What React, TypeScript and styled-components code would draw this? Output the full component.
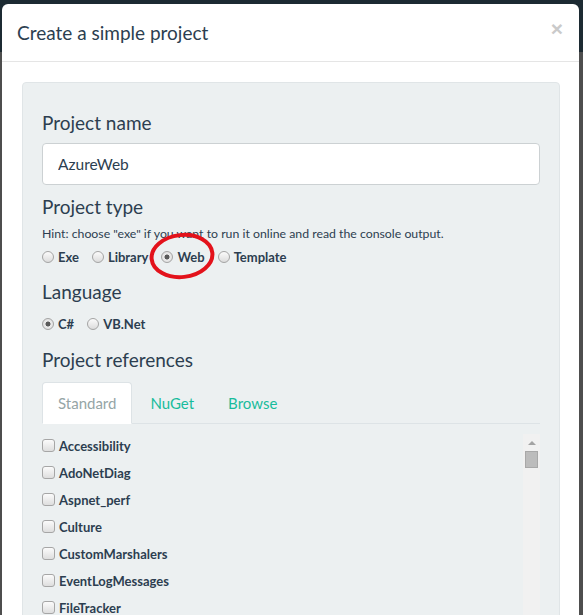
import React from 'react';
import styled, { createGlobalStyle } from 'styled-components';

const GlobalStyle = createGlobalStyle`
  html, body { margin: 0; padding: 0; }
  body {
    width: 583px;
    height: 615px;
    overflow: hidden;
    background: linear-gradient(to bottom, #1c2a32 0, #1c2a32 52px, #4e4e4e 52px);
    font-family: Lato, "Open Sans", sans-serif;
    color: #2c3e50;
  }
  * { box-sizing: border-box; }
`;

const Modal = styled.div`
  margin: 4px 4px 0 2px;
  width: 577px;
  height: 611px;
  background: #fff;
  border-radius: 6px 6px 0 0;
  overflow: hidden;
`;

const Header = styled.div`
  display: flex;
  justify-content: space-between;
  align-items: flex-start;
  height: 58px;
  padding: 17px 16px 0 15px;
  border-bottom: 1px solid #e5e5e5;
`;

const Title = styled.h4`
  margin: 0;
  font-size: 19px;
  line-height: 23px;
  font-weight: 400;
  color: #2c3e50;
`;

const Close = styled.button`
  border: 0;
  background: none;
  padding: 0;
  margin-top: -3px;
  font-family: "Liberation Sans", Arial, sans-serif;
  font-size: 21px;
  font-weight: 700;
  line-height: 21px;
  color: #cacaca;
  cursor: pointer;
`;

const Body = styled.div`
  padding: 20px 19px 0 20px;
`;

const Panel = styled.div`
  background: #ecf0f1;
  border: 1px solid #e0e5e7;
  border-radius: 4px;
  padding: 29px 19px 0 19px;
  height: 700px;
`;

const Field = styled.div<{ $top?: number }>`
  margin-top: ${(p) => p.$top ?? 0}px;
`;

const Heading = styled.div<{ $gap?: number }>`
  font-size: 19px;
  line-height: 22px;
  color: #2c3e50;
  margin-bottom: ${(p) => p.$gap ?? 0}px;
`;

const TextInput = styled.input`
  display: block;
  width: 100%;
  height: 42px;
  border: 1px solid #ccd1d3;
  border-radius: 4px;
  background: #fff;
  padding: 0 15px;
  font-family: Lato, sans-serif;
  font-size: 15.5px;
  color: #2c3e50;
  outline: none;
`;

const Hint = styled.div`
  margin-top: 7px;
  font-size: 12.3px;
  line-height: 18px;
  color: #2c3e50;
`;

const OptionRow = styled.div<{ $top: number }>`
  display: flex;
  align-items: baseline;
  gap: 13px;
  margin-top: ${(p) => p.$top}px;
  height: 18px;
`;

const Option = styled.label`
  position: relative;
  display: inline-flex;
  align-items: baseline;
  gap: 4px;
  font-size: 13px;
  line-height: 18px;
  font-weight: 700;
  color: #2c3e50;
`;

const RadioDot = styled.span<{ $checked?: boolean }>`
  display: inline-block;
  width: 12px;
  height: 12px;
  border-radius: 50%;
  border: 1px solid #a4a4a4;
  background: ${(p) =>
    p.$checked
      ? 'radial-gradient(circle, #5a5a5a 0, #5a5a5a 2.2px, #ececec 2.8px, #d8d8d8 100%)'
      : 'linear-gradient(#fbfbfb, #dcdcdc)'};
  position: relative;
  top: 1px;
`;

const Annotation = styled.svg`
  position: absolute;
  left: -14px;
  top: -17px;
  width: 70px;
  height: 50px;
  overflow: visible;
  pointer-events: none;
`;

const Tabs = styled.div`
  display: flex;
  margin-top: 11px;
  border-bottom: 1px solid #dde3e6;
`;

const Tab = styled.div<{ $active?: boolean }>`
  padding: 10px 15px;
  margin-right: 2px;
  margin-bottom: -1px;
  font-size: 15px;
  line-height: 20px;
  border: 1px solid ${(p) => (p.$active ? '#dde3e6' : 'transparent')};
  border-bottom-color: transparent;
  border-radius: 4px 4px 0 0;
  background: ${(p) => (p.$active ? '#fff' : 'transparent')};
  color: ${(p) => (p.$active ? '#95a5a6' : '#18bc9c')};
`;

const ListArea = styled.div`
  display: flex;
  margin-top: 10px;
  height: 260px;
`;

const Items = styled.div`
  flex: 1;
  padding-top: 2px;
`;

const Item = styled.label`
  display: flex;
  align-items: baseline;
  gap: 4px;
  height: 20px;
  margin-bottom: 7px;
  font-size: 13px;
  line-height: 20px;
  font-weight: 700;
  color: #2c3e50;
`;

const CheckBox = styled.span`
  display: inline-block;
  width: 13px;
  height: 13px;
  border: 1px solid #a6a6a6;
  border-radius: 3px;
  background: linear-gradient(#fbfbfb, #dedede);
  position: relative;
  top: 1px;
`;

const ScrollTrack = styled.div`
  width: 17px;
  background: #f1f1f1;
  display: flex;
  flex-direction: column;
  align-items: center;
  padding-top: 7px;
`;

const ScrollArrow = styled.div`
  width: 0;
  height: 0;
  border-left: 4px solid transparent;
  border-right: 4px solid transparent;
  border-bottom: 4px solid #a3a3a3;
`;

const ScrollThumb = styled.div`
  width: 13px;
  height: 17px;
  margin-top: 6px;
  background: #bcbcbc;
  border: 1px solid #a8a8a8;
`;

const refs = [
  'Accessibility',
  'AdoNetDiag',
  'Aspnet_perf',
  'Culture',
  'CustomMarshalers',
  'EventLogMessages',
  'FileTracker',
  'ISymWrapper',
  'Microsoft.Build',
];

const types = ['Exe', 'Library', 'Web', 'Template'];

export default function App() {
  return (
    <>
      <GlobalStyle />
      <Modal>
        <Header>
          <Title>Create a simple project</Title>
          <Close aria-label="Close">×</Close>
        </Header>
        <Body>
          <Panel>
            <Field>
              <Heading $gap={9}>Project name</Heading>
              <TextInput defaultValue="AzureWeb" />
            </Field>
            <Field $top={11}>
              <Heading>Project type</Heading>
              <Hint>Hint: choose "exe" if you want to run it online and read the console output.</Hint>
              <OptionRow $top={5}>
                {types.map((t) => (
                  <Option key={t}>
                    <RadioDot $checked={t === 'Web'} />
                    {t}
                    {t === 'Web' && (
                      <Annotation viewBox="0 0 70 50">
                        <ellipse
                          cx="35"
                          cy="25"
                          rx="30.5"
                          ry="21"
                          fill="none"
                          stroke="#e3121b"
                          strokeWidth="4"
                          transform="rotate(-6 35 25)"
                        />
                      </Annotation>
                    )}
                  </Option>
                ))}
              </OptionRow>
            </Field>
            <Field $top={15}>
              <Heading>Language</Heading>
              <OptionRow $top={12}>
                <Option>
                  <RadioDot $checked />
                  C#
                </Option>
                <Option>
                  <RadioDot />
                  VB.Net
                </Option>
              </OptionRow>
            </Field>
            <Field $top={16}>
              <Heading>Project references</Heading>
              <Tabs>
                <Tab $active>Standard</Tab>
                <Tab>NuGet</Tab>
                <Tab>Browse</Tab>
              </Tabs>
              <ListArea>
                <Items>
                  {refs.map((r) => (
                    <Item key={r}>
                      <CheckBox />
                      {r}
                    </Item>
                  ))}
                </Items>
                <ScrollTrack>
                  <ScrollArrow />
                  <ScrollThumb />
                </ScrollTrack>
              </ListArea>
            </Field>
          </Panel>
        </Body>
      </Modal>
    </>
  );
}
